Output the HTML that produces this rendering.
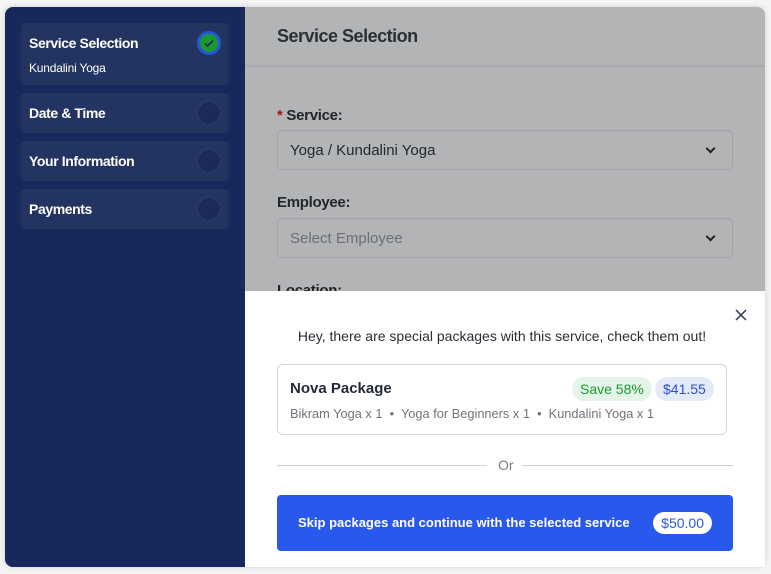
<!DOCTYPE html>
<html><head><style>
*{box-sizing:border-box;margin:0;padding:0}
body{width:771px;height:574px;background:#f4f4f5;font-family:"Liberation Sans",sans-serif;position:relative;overflow:hidden}
.card{position:absolute;left:5px;top:7px;width:760px;height:560px;border-radius:8px;overflow:hidden;background:#b3b4b6;box-shadow:0 0 6px rgba(0,0,0,.15)}
.side{position:absolute;left:0;top:0;width:240px;height:560px;background:#17285a}
.step{position:absolute;left:16px;width:208px;background:#233461;border-radius:4px;color:#fff}
.step .t{position:absolute;left:8px;font-size:14px;font-weight:bold;letter-spacing:-0.4px}
.step .c{position:absolute;right:8px;width:24px;height:24px;border-radius:50%;background:#1b2a58;border:1px solid #2b3c6a}
.main{position:absolute;left:240px;top:0;right:0;height:560px}
.hdr{height:60px;border-bottom:2px solid #a9aaad;padding:19px 32px;font-size:18px;font-weight:bold;color:#2b2f36;letter-spacing:-0.5px}
.lbl{position:absolute;left:32px;font-size:15px;font-weight:bold;color:#22262b;letter-spacing:-0.3px}
.sel{position:absolute;left:32px;width:456px;height:40px;border:1px solid #a2a3a6;border-radius:5px;padding:11px 12px;font-size:15px;color:#23272c}
.sel:after{content:"";position:absolute;right:18px;top:14px;width:5px;height:5px;border-right:2px solid #222;border-bottom:2px solid #222;transform:rotate(45deg)}
.pop{position:absolute;left:245px;top:291px;width:520px;height:276px;background:#fff}
</style></head><body>
<div class="card">
<div class="side">
 <div class="step" style="top:16px;height:62px"><div class="t" style="top:12px">Service Selection</div><div style="position:absolute;left:8px;top:38px;font-size:12px;letter-spacing:-0.2px">Kundalini Yoga</div>
  <div class="c" style="top:8px;background:#1a9a2e;border:3px solid #2456d8"><svg width="18" height="18" viewBox="0 0 18 18" style="position:absolute;left:0;top:0"><path d="M5 9.5l2.5 2.5L13 6.5" stroke="#1e2a5a" stroke-width="1.6" fill="none"/></svg></div></div>
 <div class="step" style="top:86px;height:40px"><div class="t" style="top:12px">Date &amp; Time</div><div class="c" style="top:8px"></div></div>
 <div class="step" style="top:134px;height:40px"><div class="t" style="top:12px">Your Information</div><div class="c" style="top:8px"></div></div>
 <div class="step" style="top:182px;height:40px"><div class="t" style="top:12px">Payments</div><div class="c" style="top:8px"></div></div>
</div>
<div class="main">
 <div class="hdr">Service Selection</div>
 <div class="lbl" style="top:100px"><span style="color:#a01818">*</span> Service:</div>
 <div class="sel" style="top:123px">Yoga / Kundalini Yoga</div>
 <div class="lbl" style="top:187px">Employee:</div>
 <div class="sel" style="top:211px;color:#6c6f74">Select Employee</div>
 <div class="lbl" style="top:275px">Location:</div>
</div>
</div>
<div class="pop">
 <svg width="12" height="12" viewBox="0 0 12 12" style="position:absolute;left:490px;top:18px"><path d="M1 1L11 11M11 1L1 11" stroke="#2b3550" stroke-width="1.5"/></svg>
 <div style="position:absolute;left:0;right:6px;top:37px;text-align:center;font-size:14px;color:#2a2e34">Hey, there are special packages with this service, check them out!</div>
 <div style="position:absolute;left:32px;top:73px;width:450px;height:71px;border:1px solid #d4d5d8;border-radius:6px">
  <div style="position:absolute;left:12px;top:15px;font-size:15px;font-weight:bold;color:#1f2a38">Nova Package</div>
  <div style="position:absolute;left:294px;top:12px;height:24px;padding:4px 8px;border-radius:12px;background:#e5f4e8;color:#1a9a2e;font-size:14px">Save 58%</div>
  <div style="position:absolute;left:377px;top:12px;height:24px;padding:4px 8px;border-radius:12px;background:#e5eaf9;color:#2a4fd6;font-size:14px">$41.55</div>
  <div style="position:absolute;left:12px;top:41px;font-size:12.8px;color:#70747a">Bikram Yoga x 1 &nbsp;•&nbsp; Yoga for Beginners x 1 &nbsp;•&nbsp; Kundalini Yoga x 1</div>
 </div>
 <div style="position:absolute;left:32px;top:174px;width:210px;height:1px;background:#cfd0d3"></div>
 <div style="position:absolute;left:253px;top:166px;font-size:14px;color:#7a7d82">Or</div>
 <div style="position:absolute;left:277px;top:174px;width:211px;height:1px;background:#cfd0d3"></div>
 <div style="position:absolute;left:32px;top:204px;width:456px;height:56px;background:#2858ec;border-radius:4px">
  <div style="position:absolute;left:21px;top:20px;color:#fff;font-size:13px;font-weight:bold;letter-spacing:0px">Skip packages and continue with the selected service</div>
  <div style="position:absolute;right:21px;top:17px;height:22px;padding:3px 8px;background:#fff;border-radius:11px;color:#2858ec;font-size:14px">$50.00</div>
 </div>
</div>
</body></html>
